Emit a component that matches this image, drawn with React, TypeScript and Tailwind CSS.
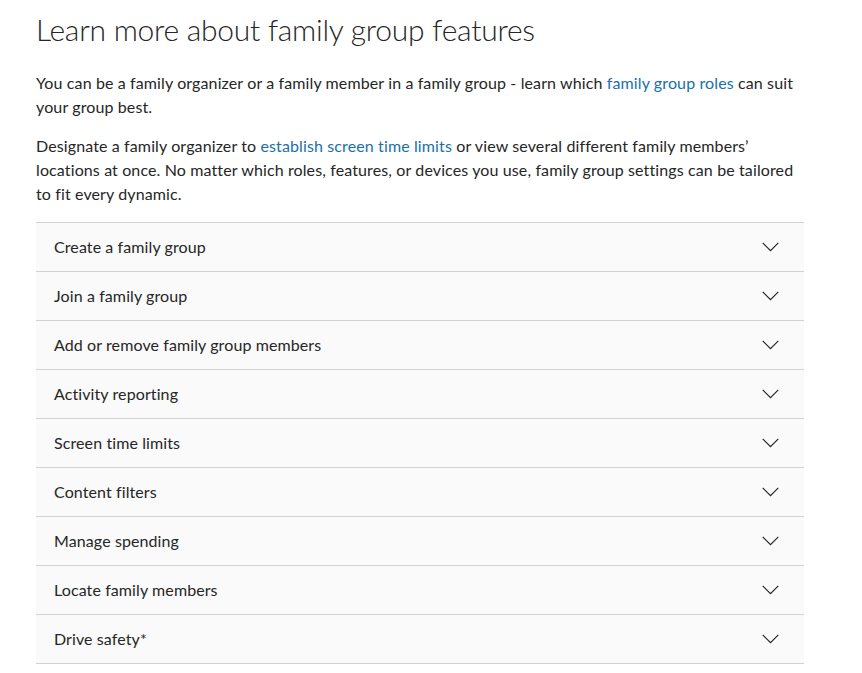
const topics = [
  'Create a family group',
  'Join a family group',
  'Add or remove family group members',
  'Activity reporting',
  'Screen time limits',
  'Content filters',
  'Manage spending',
  'Locate family members',
  'Drive safety*',
];

function Chevron() {
  return (
    <svg width="17" height="10" viewBox="0 0 17 10" fill="none" className="shrink-0">
      <polyline points="0.7,0.8 8.5,8.6 16.3,0.8" stroke="#262626" strokeWidth="1.2" />
    </svg>
  );
}

export default function App() {
  return (
    <div className="min-h-screen bg-white text-[#262626] font-['Segoe_UI','Lato','Open_Sans',sans-serif]">
      <div className="w-[768px] ml-[36px] pt-[9px]">
        <h1 className="text-[30px] leading-[40px] font-light tracking-[-0.25px]">
          Learn more about family group features
        </h1>

        <p className="mt-[22px] text-[16px] leading-[24px] tracking-[0.12px]">
          You can be a family organizer or a family member in a family group - learn which{' '}
          <a href="#" className="text-[#1b6fa9]">family group roles</a> can suit your group best.
        </p>
        <p className="mt-[15px] text-[16px] leading-[24px] tracking-[0.12px]">
          Designate a family organizer to{' '}
          <a href="#" className="text-[#1b6fa9]">establish screen time limits</a> or view several
          different family members’ locations at once. No matter which roles, features, or devices
          you use, family group settings can be tailored to fit every dynamic.
        </p>

        {/* expandable feature list */}
        <div className="mt-[16px] border-t border-[#d2d2d2]">
          {topics.map((t) => (
            <button
              key={t}
              className="w-full h-[49px] flex items-center justify-between pl-[18px] pr-[25px] bg-[#fafafa] border-b border-[#d2d2d2] text-left text-[16px] tracking-[0.1px]"
            >
              <span>{t}</span>
              <Chevron />
            </button>
          ))}
        </div>
      </div>
    </div>
  );
}
